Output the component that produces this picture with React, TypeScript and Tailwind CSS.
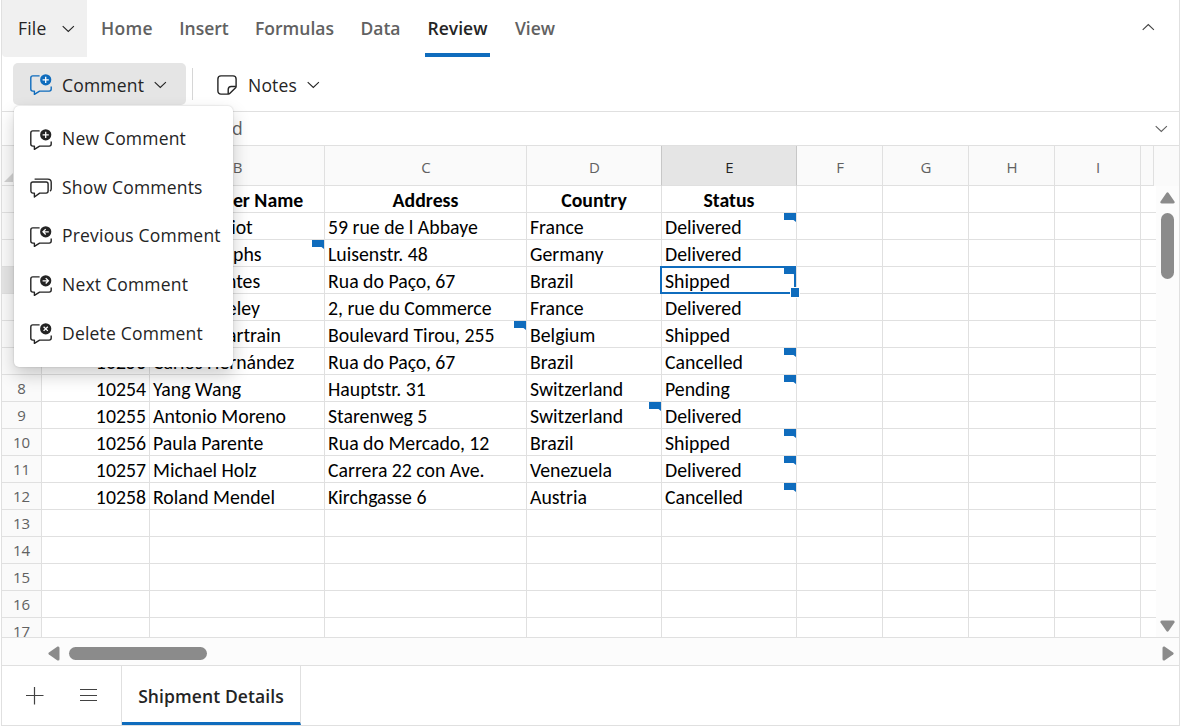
import type { ReactNode } from "react";

type SheetRow = {
  cells: string[];
  comments?: number[];
};

type Column = {
  name: string;
  width: string;
};

const COLUMNS: Column[] = [
  { name: "A", width: "w-[108px]" },
  { name: "B", width: "w-[175px]" },
  { name: "C", width: "w-[202px]" },
  { name: "D", width: "w-[135px]" },
  { name: "E", width: "w-[135px]" },
  { name: "F", width: "w-[86px]" },
  { name: "G", width: "w-[86px]" },
  { name: "H", width: "w-[86px]" },
  { name: "I", width: "w-[86px]" },
];

const ROWS: SheetRow[] = [
  { cells: ["Order ID", "Customer Name", "Address", "Country", "Status"] },
  { cells: ["10248", "Paul Henriot", "59 rue de l Abbaye", "France", "Delivered"], comments: [4] },
  { cells: ["10249", "Karin Josephs", "Luisenstr. 48", "Germany", "Delivered"], comments: [1] },
  { cells: ["10250", "Mario Pontes", "Rua do Paço, 67", "Brazil", "Shipped"], comments: [4] },
  { cells: ["10251", "Mary Saveley", "2, rue du Commerce", "France", "Delivered"] },
  { cells: ["10252", "Pascale Cartrain", "Boulevard Tirou, 255", "Belgium", "Shipped"], comments: [2] },
  { cells: ["10253", "Carlos Hernández", "Rua do Paço, 67", "Brazil", "Cancelled"], comments: [4] },
  { cells: ["10254", "Yang Wang", "Hauptstr. 31", "Switzerland", "Pending"], comments: [4] },
  { cells: ["10255", "Antonio Moreno", "Starenweg 5", "Switzerland", "Delivered"], comments: [3] },
  { cells: ["10256", "Paula Parente", "Rua do Mercado, 12", "Brazil", "Shipped"], comments: [4] },
  { cells: ["10257", "Michael Holz", "Carrera 22 con Ave.", "Venezuela", "Delivered"], comments: [4] },
  { cells: ["10258", "Roland Mendel", "Kirchgasse 6", "Austria", "Cancelled"], comments: [4] },
  { cells: [] },
  { cells: [] },
  { cells: [] },
  { cells: [] },
  { cells: [] },
];

const ACTIVE_ROW = 3;
const ACTIVE_COL = 4;

const TABS = [
  { label: "Home", width: "w-[52px]" },
  { label: "Insert", width: "w-[50px]" },
  { label: "Formulas", width: "w-[79px]" },
  { label: "Data", width: "w-[41px]" },
  { label: "Review", width: "w-[61px]" },
  { label: "View", width: "w-[42px]" },
];

function Chevron({ up = false }: { up?: boolean }) {
  return (
    <svg className="h-[8px] w-[13px] shrink-0" viewBox="0 0 13 8" fill="none" stroke="currentColor" strokeWidth="1.1">
      <path d={up ? "M.7 6.9 6.3 1.5l5.6 5.4" : "M.7 1.1l5.6 5.4 5.6-5.4"} />
    </svg>
  );
}

function CommentIcon({ children }: { children: ReactNode }) {
  return (
    <svg className="h-[22px] w-[22px] shrink-0" viewBox="0 0 22 22" fill="none" stroke="currentColor" strokeWidth="1.4">
      <path d="M9.6 1.9H2.8C1.6 1.9.8 2.7.8 3.9v11.2c0 1.2.8 2 2 2h1.6v3.3l5.2-3.3h9.6c1.2 0 2-.8 2-2v-2.7" strokeLinejoin="round" />
      <circle cx="15.7" cy="5.8" r="5.6" fill="currentColor" stroke="none" />
      <g stroke="#fff" strokeWidth="1.3">{children}</g>
    </svg>
  );
}

function PlusGlyph() {
  return <path d="M15.7 2.7v6.2M12.6 5.8h6.2" />;
}

function ShowCommentsIcon() {
  return (
    <svg className="h-[22px] w-[22px] shrink-0" viewBox="0 0 22 22" fill="none" stroke="currentColor" strokeWidth="1.4" strokeLinejoin="round">
      <path d="M2.9 5h13.2c1.2 0 2 .8 2 2v7.100c0 1.200-.8 2-2 2H9.700l-5.300 3.900v-3.900H2.900c-1.200 0-2-.8-2-2V7c0-1.200.8-2 2-2z" />
      <path d="M4.600 2.100h13.200c2.200 0 3.400 1.400 3.400 3.200v6.800c0 .9-.5 1.600-1.200 2" />
    </svg>
  );
}

function NoteIcon() {
  return (
    <svg className="h-[20px] w-[20px] shrink-0" viewBox="0 0 20 20" fill="none" stroke="currentColor" strokeWidth="1.4" strokeLinejoin="round">
      <path d="M4 .9h12c1.8 0 3.1 1.3 3.1 3.1v7.5c0 .5-.2.9-.5 1.2l-5.9 5.9c-.3.3-.7.5-1.2.5H4c-1.8 0-3.1-1.3-3.1-3.1V4C.9 2.2 2.2.9 4 .9z" />
      <path d="M11.2 18.9v-4.3c0-1.8 1.3-3.1 3.1-3.1h4.6" />
    </svg>
  );
}

const MENU_ITEMS = [
  { label: "New Comment", icon: <CommentIcon><PlusGlyph /></CommentIcon> },
  { label: "Show Comments", icon: <ShowCommentsIcon /> },
  { label: "Previous Comment", icon: <CommentIcon><path d="M18.8 5.8h-5.6M15.7 3.1 13 5.8l2.7 2.7" /></CommentIcon> },
  { label: "Next Comment", icon: <CommentIcon><path d="M12.6 5.8h5.6M15.7 3.1l2.7 2.7-2.7 2.7" /></CommentIcon> },
  { label: "Delete Comment", icon: <CommentIcon><path d="M13.6 3.7l4.2 4.2M17.8 3.7l-4.2 4.2" /></CommentIcon> },
];

function RibbonTabs() {
  return (
    <div className="flex h-[57px] shrink-0 text-[17.5px] text-[#616161]">
      <div className="flex w-[85px] items-center justify-between rounded-bl-[4px] bg-[#f0f0f0] pr-[12px] pl-[16px] text-[#242424]">
        <span className="tracking-[0.2px]">File</span>
        <Chevron />
      </div>
      <div className="flex gap-[26px] pl-[14px] font-semibold">
        {TABS.map((tab) => (
          <div
            key={tab.label}
            className={`relative flex items-center justify-center whitespace-nowrap ${tab.width} ${
              tab.label === "Review" ? "text-[#242424]" : ""
            } ${tab.label === "Home" ? "tracking-[0.3px]" : ""}`}
          >
            {tab.label}
            {tab.label === "Review" ? (
              <span className="absolute -right-[2px] bottom-0 -left-[2px] h-[4px] bg-[#0f6cbd]" />
            ) : null}
          </div>
        ))}
      </div>
      <div className="ml-auto flex items-center pr-[24px] pb-[3px] text-[#424242]">
        <Chevron up />
      </div>
    </div>
  );
}

function CommentMenu() {
  return (
    <div className="absolute top-[43px] left-[1px] z-20 h-[261px] w-[219px] rounded-[5px] bg-white py-[8px] shadow-[0_0_2px_rgba(0,0,0,0.2),0_8px_18px_rgba(0,0,0,0.2)]">
      {MENU_ITEMS.map((item) => (
        <div key={item.label} className="flex h-[48.6px] items-center gap-[10px] pl-[16px] whitespace-nowrap text-[#242424]">
          <span className="pt-[3px]">{item.icon}</span>
          <span className="tracking-[0.2px]">{item.label}</span>
        </div>
      ))}
    </div>
  );
}

function Toolbar() {
  return (
    <div className="flex h-[55px] shrink-0 border-b border-[#e0e0e0] pt-[6px] pl-[11px] text-[17.5px] tracking-[0.2px] text-[#242424]">
      <div className="relative h-[42px] w-[173px]">
        <div className="flex h-full items-center rounded-[5px] bg-[#e5e5e5] pt-[2px] pl-[17px]">
          <span className="text-[#0f6cbd]"><CommentIcon><PlusGlyph /></CommentIcon></span>
          <span className="w-[102px] pl-[10px]">Comment</span>
          <Chevron />
        </div>
        <CommentMenu />
      </div>
      <div className="mt-[5px] ml-[6px] h-[32px] w-px bg-[#d6d6d6]" />
      <div className="flex h-[42px] items-center pt-[2px] pl-[24px]">
        <NoteIcon />
        <span className="w-[70px] pl-[11px]">Notes</span>
        <Chevron />
      </div>
    </div>
  );
}

function FormulaBar() {
  return (
    <div className="flex h-[34px] shrink-0 items-center justify-between border-b border-[#e0e0e0] pr-[11px] pl-[174px] text-[17.5px] text-[#616161]">
      <span>Shipped</span>
      <Chevron />
    </div>
  );
}

function ColumnHeaders() {
  return (
    <div className="flex h-[40px] shrink-0 bg-[#fafafa] text-[15px] text-[#616161]">
      <div className="flex w-[40px] items-end border-r border-b border-[#e0e0e0] pb-[3px] pl-[2px]">
        <svg className="h-[9px] w-[9px]" viewBox="0 0 9 9"><path d="M9 0v9H0z" fill="#d1d1d1" /></svg>
      </div>
      {COLUMNS.map((col, index) => (
        <div
          key={col.name}
          className={`flex items-center justify-center border-r border-b pt-[4px] pl-[1px] ${col.width} ${
            index === ACTIVE_COL
              ? "border-r-[#c7c7c7] border-b-[#e0e0e0] bg-[#e5e5e5] text-[#242424]"
              : index === ACTIVE_COL - 1
                ? "border-r-[#c7c7c7] border-b-[#e0e0e0]"
                : "border-[#e0e0e0]"
          }`}
        >
          {col.name}
        </div>
      ))}
      <div className="w-[13px] border-r border-b border-[#e0e0e0]" />
    </div>
  );
}

function CommentMarker() {
  return (
    <svg className="absolute top-0 right-0 h-[9px] w-[12px]" viewBox="0 0 12 9" fill="#0f6cbd">
      <path d="M0 0h12v9L9.5 7H0z" />
    </svg>
  );
}

function Selection() {
  return (
    <>
      <div className="absolute -top-px right-0 -bottom-px -left-[2px] border-2 border-[#0f6cbd]" />
      <div className="absolute -right-[4px] -bottom-[5px] z-10 h-[11px] w-[10px] border border-white bg-[#0f6cbd]" />
    </>
  );
}

function GridRow({ row, index }: { row: SheetRow; index: number }) {
  return (
    <div className="flex h-[27px] shrink-0">
      <div
        className={`flex w-[40px] shrink-0 items-center justify-center border-r border-b border-[#e0e0e0] pt-[1px] text-[15px] text-[#616161] ${
          index === ACTIVE_ROW ? "bg-[#e5e5e5]" : "bg-[#fafafa]"
        }`}
      >
        {index + 1}
      </div>
      {COLUMNS.map((col, c) => (
        <div
          key={col.name}
          className={`relative flex shrink-0 items-center border-r border-b border-[#e0e0e0] px-[3px] pt-[1px] font-[Carlito,Lato,sans-serif] text-[19.8px] leading-[24px] whitespace-nowrap text-black ${col.width} ${
            index === 0 ? "justify-center font-bold" : c === 0 ? "justify-end" : ""
          }`}
        >
          {row.cells[c]}
          {index === ACTIVE_ROW && c === ACTIVE_COL ? <Selection /> : null}
          {row.comments?.includes(c) ? <CommentMarker /> : null}
        </div>
      ))}
      <div className="flex-1 border-b border-[#e0e0e0]" />
    </div>
  );
}

function SheetGrid() {
  return (
    <div className="flex h-[452px] shrink-0 border-b border-[#e0e0e0]">
      <div className="flex w-[1154px] flex-col overflow-hidden">
        {ROWS.map((row, index) => (
          <GridRow key={index} row={row} index={index} />
        ))}
      </div>
      <div className="flex flex-1 flex-col items-center bg-[#fcfcfc] pt-[6px] pb-[5px] text-[#8b8b8b]">
        <svg className="h-[12px] w-[15px] shrink-0" viewBox="0 0 15 12" fill="currentColor">
          <path d="M6.4.9Q7.5-.2 8.6.9l5.9 8.6Q15 11.5 13 11.5H2Q0 11.5.5 9.5z" />
        </svg>
        <div className="mt-[9px] h-[66px] w-[13px] rounded-full bg-[#8b8b8b]" />
        <svg className="mt-auto h-[12px] w-[15px] shrink-0" viewBox="0 0 15 12" fill="currentColor">
          <path d="M6.4 11.1q1.1 1.1 2.2 0l5.9-8.6Q15 .5 13 .5H2Q0 .5.5 2.5z" />
        </svg>
      </div>
    </div>
  );
}

function HorizontalScroll() {
  return (
    <div className="flex h-[28px] shrink-0 items-center border-b border-[#e0e0e0] bg-[#fcfcfc] pt-[4px] pr-[5px] pl-[46px] text-[#8b8b8b]">
      <svg className="h-[15px] w-[12px]" viewBox="0 0 12 15" fill="currentColor">
        <path d="M.9 6.4q-1.1 1.1 0 2.2l8.6 5.9q2 .5 2-1.5V2q0-2-2-1.5z" />
      </svg>
      <div className="mb-[1px] ml-[9px] h-[13px] w-[138px] rounded-full bg-[#8b8b8b]" />
      <svg className="ml-auto h-[15px] w-[12px]" viewBox="0 0 12 15" fill="currentColor">
        <path d="M11.1 6.4q1.1 1.1 0 2.2l-8.6 5.9q-2 .5-2-1.5V2q0-2 2-1.5z" />
      </svg>
    </div>
  );
}

function SheetTabs() {
  return (
    <div className="flex flex-1 text-[#424242]">
      <div className="flex w-[120px] items-center gap-[36px] border-r border-[#e0e0e0] pl-[24px]">
        <svg className="h-[18px] w-[18px]" viewBox="0 0 18 18" fill="none" stroke="currentColor" strokeWidth="1.2">
          <path d="M8.5 0v17.5M0 8.5h17.5" />
        </svg>
        <svg className="h-[18px] w-[17px]" viewBox="0 0 17 18" fill="none" stroke="currentColor" strokeWidth="1.2">
          <path d="M0 2.5h17M0 8.5h17M0 13.5h17" />
        </svg>
      </div>
      <div className="flex w-[179px] items-center justify-center border-r border-b-[3px] border-r-[#e0e0e0] border-b-[#0f6cbd] pt-[5px] text-[17.5px] font-semibold tracking-[0.1px] whitespace-nowrap text-[#242424]">
        Shipment Details
      </div>
    </div>
  );
}

export default function App() {
  return (
    <div className="h-[727px] w-[1183px] bg-white pl-px font-['Open_Sans','Noto_Sans',sans-serif]">
      <div className="flex h-[726px] w-[1179px] flex-col border-r border-b border-l border-[#e0e0e0]">
        <RibbonTabs />
        <Toolbar />
        <FormulaBar />
        <ColumnHeaders />
        <SheetGrid />
        <HorizontalScroll />
        <SheetTabs />
      </div>
    </div>
  );
}
